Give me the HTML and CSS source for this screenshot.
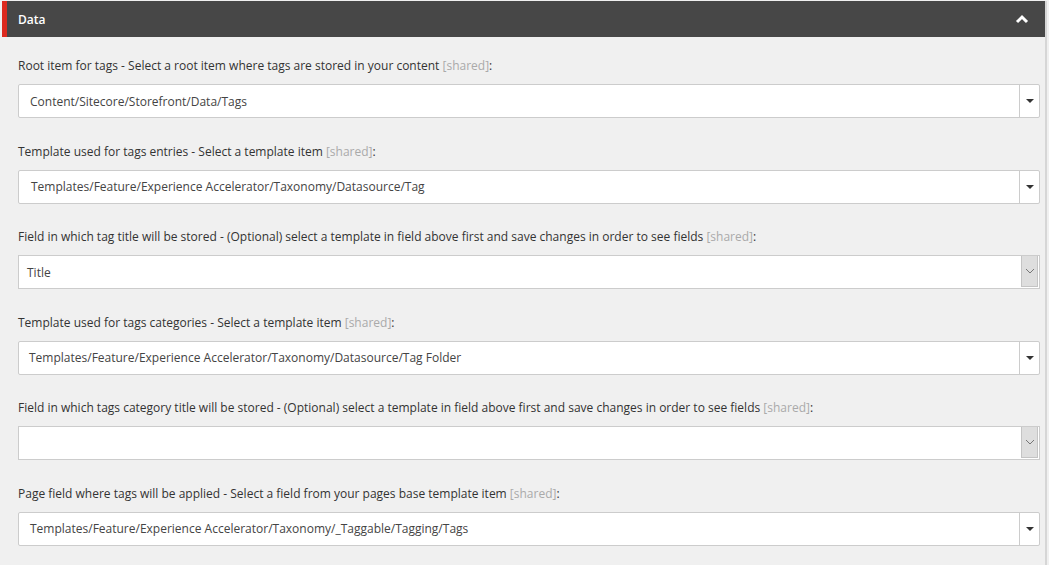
FILE: index.html
```html
<!DOCTYPE html>
<html>
<head>
<meta charset="utf-8">
<link rel="stylesheet" href="styles.css">
</head>
<body>
<div class="panel">
  <div class="header">
    <span class="title">Data</span>
    <svg class="collapse" width="14" height="10" viewBox="0 0 14 10"><polyline points="2,8 7,3 12,8" fill="none" stroke="#fff" stroke-width="3"/></svg>
  </div>
  <div class="body">
    <div class="field">
      <div class="label">Root item for tags - Select a root item where tags are stored in your content <span class="shared">[shared]</span>:</div>
      <div class="input">
        <span class="value v1">Content/Sitecore/Storefront/Data/Tags</span>
        <span class="drop"><span class="caret"></span></span>
      </div>
    </div>
    <div class="field">
      <div class="label">Template used for tags entries - Select a template item <span class="shared">[shared]</span>:</div>
      <div class="input">
        <span class="value v2">Templates/Feature/Experience Accelerator/Taxonomy/Datasource/Tag</span>
        <span class="drop"><span class="caret"></span></span>
      </div>
    </div>
    <div class="field">
      <div class="label">Field in which tag title will be stored - (Optional) select a template in field above first and save changes in order to see fields <span class="shared">[shared]</span>:</div>
      <div class="input native">
        <span class="value v3">Title</span>
        <span class="nbtn"><svg width="10" height="6" viewBox="0 0 10 6"><polyline points="1,1 5,5 9,1" fill="none" stroke="#777" stroke-width="1"/></svg></span>
      </div>
    </div>
    <div class="field">
      <div class="label">Template used for tags categories - Select a template item <span class="shared">[shared]</span>:</div>
      <div class="input">
        <span class="value v4">Templates/Feature/Experience Accelerator/Taxonomy/Datasource/Tag Folder</span>
        <span class="drop"><span class="caret"></span></span>
      </div>
    </div>
    <div class="field">
      <div class="label">Field in which tags category title will be stored - (Optional) select a template in field above first and save changes in order to see fields <span class="shared">[shared]</span>:</div>
      <div class="input native">
        <span class="value v3"></span>
        <span class="nbtn"><svg width="10" height="6" viewBox="0 0 10 6"><polyline points="1,1 5,5 9,1" fill="none" stroke="#777" stroke-width="1"/></svg></span>
      </div>
    </div>
    <div class="field">
      <div class="label">Page field where tags will be applied - Select a field from your pages base template item <span class="shared">[shared]</span>:</div>
      <div class="input">
        <span class="value v1">Templates/Feature/Experience Accelerator/Taxonomy/_Taggable/Tagging/Tags</span>
        <span class="drop"><span class="caret"></span></span>
      </div>
    </div>
  </div>
</div>
</body>
</html>
```

FILE: styles.css
```css
html, body {
  margin: 0;
  padding: 0;
  background: #f0f0f0;
  font-family: "Open Sans", "Noto Sans", sans-serif;
  font-size: 12px;
  color: #333;
  overflow: hidden;
  height: 100%;
}
.panel {
  margin: 1px 0 0 2px;
  width: 1043px;
  height: calc(100% - 1px);
  overflow: hidden;
  border-right: 2px solid #d6d6d6;
}
.header {
  height: 36px;
  background: #474747;
  border-left: 5px solid #dc291e;
  display: flex;
  align-items: center;
  justify-content: space-between;
  padding: 0 16px 0 11px;
  box-sizing: border-box;
  color: #fff;
}
.title {
  font-weight: 600;
  font-size: 12px;
}
.collapse {
  display: block;
  margin-top: -1px;
}
.body {
  padding: 20px 5px 0 16px;
}
.field {
  margin-bottom: 24.5px;
}
.label {
  line-height: 18px;
  margin-bottom: 9px;
  white-space: nowrap;
}
.shared {
  color: #aaa;
}
.input {
  height: 34px;
  box-sizing: border-box;
  border: 1px solid #ccc;
  border-radius: 2px;
  background: #fff;
  display: flex;
  align-items: stretch;
}
.value {
  flex: 1;
  display: flex;
  align-items: center;
  color: #444;
  white-space: nowrap;
}
.v1 { padding-left: 11px; }
.v2 { padding-left: 12px; }
.v3 { padding-left: 8px; }
.v4 { padding-left: 10px; }
.drop {
  width: 19px;
  border-left: 1px solid #ccc;
  display: flex;
  align-items: center;
  justify-content: center;
}
.caret {
  width: 0;
  height: 0;
  border-left: 4px solid transparent;
  border-right: 4px solid transparent;
  border-top: 4px solid #333;
}
.native {
  border-radius: 0;
}
.nbtn {
  width: 15px;
  margin: 0 1px 1px 0;
  background: #dedede;
  border: 1px solid #c4c4c4;
  border-top: 0;
  display: flex;
  align-items: center;
  justify-content: center;
}
```
